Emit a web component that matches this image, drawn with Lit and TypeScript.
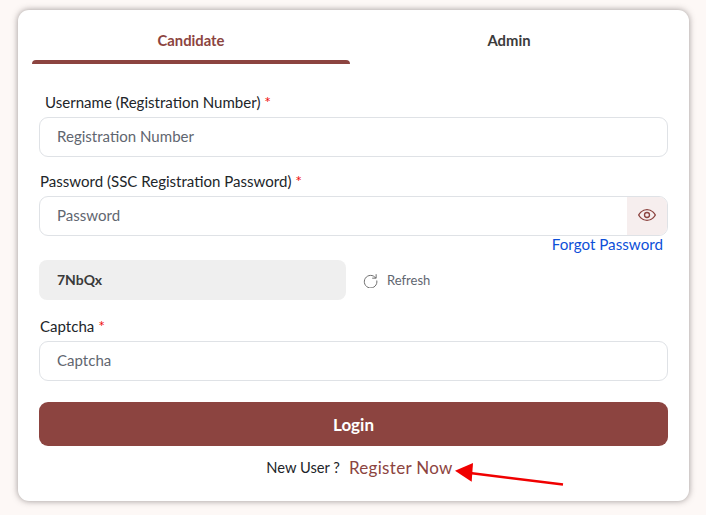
import { LitElement, html, css } from "lit";
import { customElement } from "lit/decorators.js";

@customElement("app-root")
export class AppRoot extends LitElement {
  static styles = css`
    :host { display: block; width: 706px; height: 515px; background: #fdf8f6; overflow: hidden;
      font-family: "Lato", "Open Sans", sans-serif; color: #212529; font-size: 15.05px; }
    .page { padding: 10px 17px 14px 18px; height: 515px; box-sizing: border-box; }
    .card { position: relative; background: #fff; border-radius: 11px; height: 491px; box-sizing: border-box;
      box-shadow: 0 0 6px rgba(60,50,50,.5); padding: 0 21px; }
    .tabs { display: flex; margin-left: -7px; width: 636px; height: 54px; }
    .tab { position: relative; flex: 1; text-align: center; padding-top: 21px; box-sizing: border-box; font-weight: 700; font-size: 14.8px; line-height: 19px; color: #3b3b3b; }
    .tab.active { color: #8c4440; }
    .tab.active::after { content: ""; position: absolute; left: 0; right: 0; bottom: 0; height: 4px; background: #8c4440; border-radius: 4px 4px 0 0; }
    label { display: block; line-height: 20px; }
    .req { color: #f01010; line-height: 0; font-size: 16px; }
    .u { margin: 28px 0 5px 6px; }
    .l { margin: 14px 0 5px 1px; }
    .input { height: 40px; box-sizing: border-box; border: 1px solid #dfe2e6; border-radius: 9px; display: flex; align-items: center; padding-left: 17px; color: #5f6670; background: #fff; overflow: hidden; }
    .txt { flex: 1; padding-bottom: 2px; }
    .eye { width: 40px; height: 38px; padding-bottom: 2px; box-sizing: border-box; background: #f6eeee; display: flex; align-items: center; justify-content: center; }
    .forgot { text-align: right; color: #0d4fd8; line-height: 16px; padding-right: 5px; height: 24px; font-size: 15.2px; }
    .cap-row { display: flex; align-items: center; }
    .cap { width: 307px; height: 40px; background: #efefef; border-radius: 8px; box-sizing: border-box; padding: 0 0 2px 18px; display: flex; align-items: center; font-weight: 700; font-size: 14px; color: #3a3a3a; }
    .refresh { display: flex; align-items: center; margin-left: 17px; gap: 9px; font-size: 13px; color: #5f6670; }
    .c { margin: 16px 0 5px 1px; }
    .login { margin-top: 21px; height: 44px; background: #8c4440; color: #fff; border-radius: 9px; display: flex; align-items: center; justify-content: center; font-size: 17px; font-weight: 700; }
    .foot { display: flex; justify-content: center; align-items: center; margin-top: 11px; height: 20px; gap: 9px; padding-left: 12px; font-size: 14.7px; }
    .foot a { color: #8c4440; font-size: 17px; letter-spacing: .3px; }
    .arrow { position: absolute; left: 0; top: 0; pointer-events: none; }
  `;

  render() {
    return html`<div class="page"><div class="card">
      <div class="tabs">
        <div class="tab active">Candidate</div>
        <div class="tab">Admin</div>
      </div>
      <label class="u">Username (Registration Number) <span class="req">*</span></label>
      <div class="input"><span class="txt">Registration Number</span></div>
      <label class="l">Password (SSC Registration Password) <span class="req">*</span></label>
      <div class="input"><span class="txt">Password</span>
        <div class="eye"><svg width="20" height="20" viewBox="0 0 24 24" fill="none" stroke="#8c4440" stroke-width="1.6"><path d="M2 12s3.6-6.5 10-6.5S22 12 22 12s-3.6 6.5-10 6.5S2 12 2 12z"/><circle cx="12" cy="12" r="3"/></svg></div>
      </div>
      <div class="forgot">Forgot Password</div>
      <div class="cap-row">
        <div class="cap">7NbQx</div>
        <div class="refresh"><svg width="15" height="15" viewBox="0 0 16 16" fill="none" stroke="#666" stroke-width="1"><path d="M13.6 5.4A6.7 6.7 0 1 0 14.7 8"/><path d="M14 1.3v4.2H9.8"/></svg>Refresh</div>
      </div>
      <label class="c">Captcha <span class="req">*</span></label>
      <div class="input"><span class="txt">Captcha</span></div>
      <div class="login">Login</div>
      <div class="foot"><span>New User ?</span><a>Register Now</a></div>
      <svg class="arrow" width="671" height="491" viewBox="18 10 671 491"><line x1="563" y1="484.5" x2="470" y2="473" stroke="#f00000" stroke-width="2.6"/><polygon points="455,470.7 473,463 471.7,481.7" fill="#f00000"/></svg>
    </div></div>`;
  }
}
